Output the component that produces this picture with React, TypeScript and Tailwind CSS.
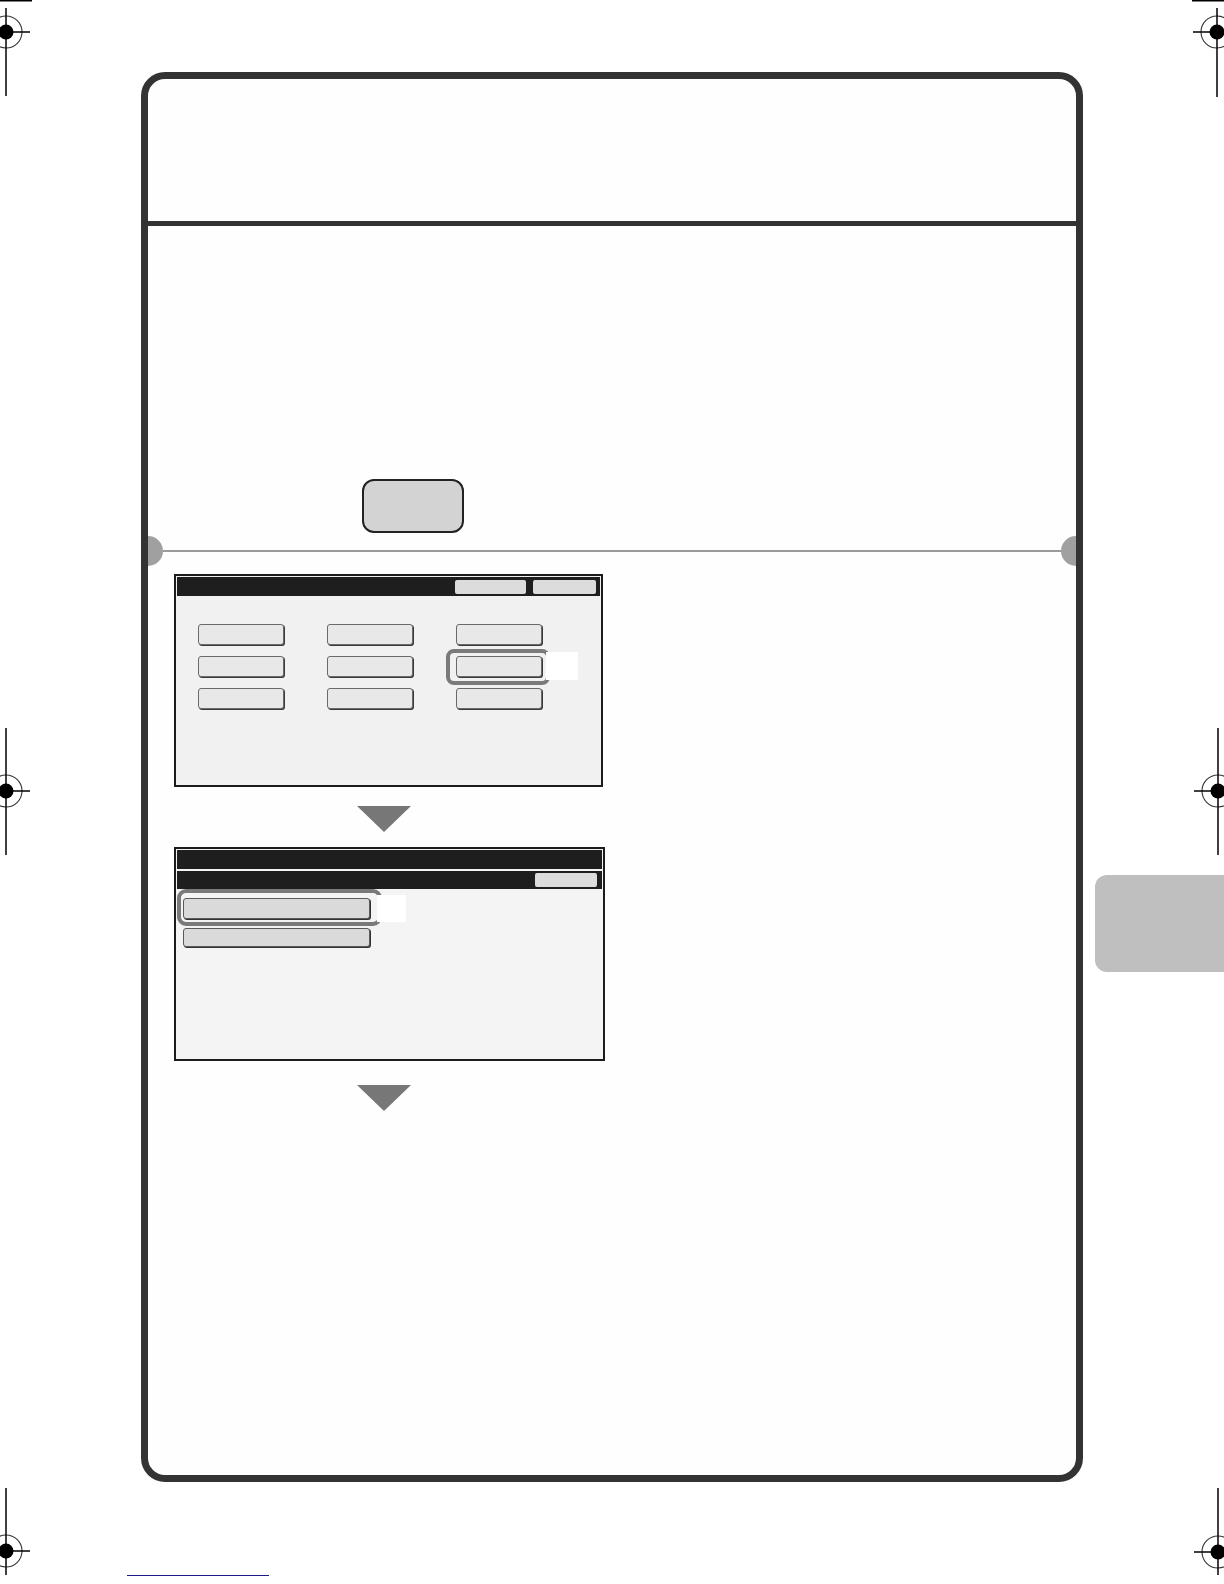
import React from "react";

type Mark = { cx: number; cy: number; v1: number; v2: number; h1: number; h2: number };

const marks: Mark[] = [
  { cx: 6, cy: 32, v1: 8, v2: 96, h1: 0, h2: 30 },
  { cx: 1217, cy: 32, v1: 8, v2: 97, h1: 1193, h2: 1224 },
  { cx: 6, cy: 791, v1: 728, v2: 855, h1: 0, h2: 30 },
  { cx: 1218, cy: 791, v1: 728, v2: 855, h1: 1194, h2: 1224 },
  { cx: 6, cy: 1551, v1: 1488, v2: 1575, h1: 0, h2: 30 },
  { cx: 1218, cy: 1552, v1: 1488, v2: 1575, h1: 1194, h2: 1224 },
];

function PrintMarks() {
  return (
    <svg
      className="absolute left-0 top-0 pointer-events-none"
      width={1224}
      height={1584}
      viewBox="0 0 1224 1584"
    >
      <line x1={0} y1={0.75} x2={32} y2={0.75} stroke="#000" strokeWidth={1.5} />
      <line x1={1192} y1={0.75} x2={1224} y2={0.75} stroke="#000" strokeWidth={1.5} />
      {marks.map((m, i) => (
        <g key={i}>
          <circle cx={m.cx} cy={m.cy} r={16} fill="none" stroke="#333" strokeWidth={1.1} />
          <circle cx={m.cx} cy={m.cy} r={7.5} fill="#000" />
          <line x1={m.cx} y1={m.v1} x2={m.cx} y2={m.v2} stroke="#000" strokeWidth={1.5} />
          <line x1={m.h1} y1={m.cy} x2={m.h2} y2={m.cy} stroke="#000" strokeWidth={1.5} />
        </g>
      ))}
      <line x1={127} y1={1575.5} x2={269} y2={1575.5} stroke="#1c1c8a" strokeWidth={1.2} />
    </svg>
  );
}

function Arrow() {
  return (
    <svg width={54} height={26} viewBox="0 0 54 26" className="block">
      <polygon points="0,0 54,0 27,26" fill="#777777" />
    </svg>
  );
}

function KeyBtn({ w }: { w: string }) {
  return (
    <div
      className={`${w} h-[21px] rounded-[3px] border border-[#6a6a6a] bg-[#e8e8e8] shadow-[1px_1px_0_#3a3a3a]`}
    />
  );
}

function Screen1() {
  return (
    <div className="ml-[26px] mt-[8px] w-[429px] h-[213px] border-2 border-[#1c1c1c] bg-[#f1f1f1] p-[1px] flex flex-col">
      <div className="h-[19px] bg-[#1e1e1e] flex items-center justify-end gap-[7px] pr-[4px]">
        <div className="w-[71px] h-[14px] rounded-[2px] bg-[#dcdcdc]" />
        <div className="w-[63px] h-[14px] rounded-[2px] bg-[#dcdcdc]" />
      </div>
      <div className="relative flex-1">
        <div className="grid grid-cols-[86px_86px_86px] gap-x-[43px] gap-y-[11px] pl-[21px] pt-[28px]">
          {Array.from({ length: 9 }).map((_, i) => (
            <KeyBtn key={i} w="w-[86px]" />
          ))}
        </div>
        <div className="absolute left-[269px] top-[53px] w-[104px] h-[36px] rounded-[8px] border-4 border-[#7a7a7a]" />
        <div className="absolute left-[369px] top-[56px] w-[32px] h-[28px] bg-white" />
      </div>
    </div>
  );
}

function Screen2() {
  return (
    <div className="ml-[26px] mt-[15px] w-[431px] h-[214px] border-2 border-[#1c1c1c] bg-[#f4f4f4] p-[1px] flex flex-col">
      <div className="h-[19px] bg-[#1e1e1e]" />
      <div className="mt-[2px] h-[18px] bg-[#1e1e1e] flex items-center justify-end pr-[5px]">
        <div className="w-[62px] h-[14px] rounded-[2px] bg-[#dcdcdc]" />
      </div>
      <div className="relative flex-1">
        <div className="flex flex-col gap-[9px] pl-[6px] pt-[9px]">
          <div className="w-[187px] h-[21px] rounded-[3px] border border-[#5a5a5a] bg-[#dadada] shadow-[1px_1px_0_#333]" />
          <div className="w-[187px] h-[19px] rounded-[3px] border border-[#5a5a5a] bg-[#dadada] shadow-[1px_1px_0_#333]" />
        </div>
        <div className="absolute left-0 top-0 w-[205px] h-[37px] rounded-[9px] border-4 border-[#7a7a7a]" />
        <div className="absolute left-[200px] top-[6px] w-[29px] h-[27px] bg-white" />
      </div>
    </div>
  );
}

export default function App() {
  return (
    <div className="relative w-[1224px] h-[1584px] bg-white overflow-hidden">
      <div className="pt-[72px] pl-[141px]">
        <div className="w-[942px] h-[1410px] rounded-[24px] border-[7px] border-[#333333] bg-[#fefefe] overflow-hidden flex flex-col">
          <div className="h-[142px] shrink-0" />
          <div className="h-[5px] bg-[#333333] shrink-0" />
          <div className="flex-1 flex flex-col">
            <div className="pt-[253px] pl-[214px]">
              <div className="w-[102px] h-[54px] rounded-[12px] border-2 border-[#222222] bg-[#d3d3d3]" />
            </div>
            <div className="relative mt-[3px] h-[30px] flex items-center">
              <div className="absolute left-[-15px] top-0 w-[30px] h-[30px] rounded-full bg-[#a0a0a0]" />
              <div className="mx-[15px] flex-1 h-[2px] bg-[#9a9a9a]" />
              <div className="absolute right-[-15px] top-0 w-[30px] h-[30px] rounded-full bg-[#a0a0a0]" />
            </div>
            <Screen1 />
            <div className="mt-[19px] ml-[209px]">
              <Arrow />
            </div>
            <Screen2 />
            <div className="mt-[24px] ml-[209px]">
              <Arrow />
            </div>
          </div>
        </div>
      </div>
      <div className="absolute left-[1095px] top-[875px] w-[129px] h-[97px] rounded-l-[12px] bg-[#bfbfbf]" />
      <PrintMarks />
    </div>
  );
}
